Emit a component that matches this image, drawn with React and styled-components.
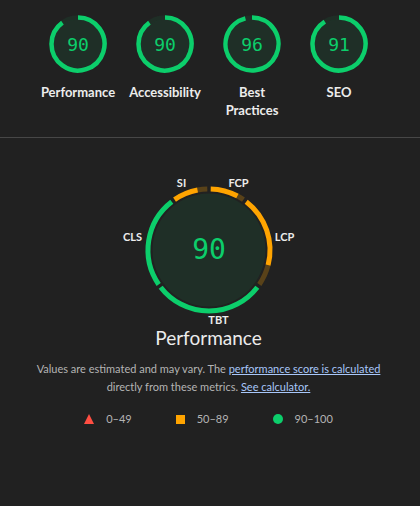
import React from 'react';
import styled, {createGlobalStyle} from 'styled-components';

const GREEN = '#0cce6b';
const ORANGE = '#ffa400';
const RED = '#ff4e42';

const GlobalStyle = createGlobalStyle`
  body {
    margin: 0;
    background: #212121;
    font-family: "Segoe UI", Lato, "Noto Sans", sans-serif;
    color: #e8e8e8;
  }
`;

const Page = styled.div`
  width: 420px;
  min-height: 506px;
  background: #212121;
`;

const TopSection = styled.div`
  display: flex;
  justify-content: center;
  align-items: flex-start;
  padding: 15px 3px 18px 0;
  border-bottom: 1px solid #474747;
`;

const ScoreItem = styled.div`
  width: 87px;
  display: flex;
  flex-direction: column;
  align-items: center;
`;

const ScoreLabel = styled.div`
  margin-top: 10px;
  font-size: 13px;
  font-weight: 700;
  line-height: 18px;
  text-align: center;
  color: #ececec;
`;

const PerfSection = styled.div`
  display: flex;
  flex-direction: column;
  align-items: center;
  padding: 32px 3px 0 0;
`;

const PerfTitle = styled.div`
  margin-top: 2px;
  font-size: 19px;
  line-height: 20px;
  color: #ececec;
`;

const Note = styled.p`
  margin: 12px 0 0;
  font-size: 11px;
  line-height: 18px;
  text-align: center;
  color: #b4b4b4;
`;

const Link = styled.a`
  color: #a8c7fa;
  text-decoration: underline;
`;

const Legend = styled.div`
  display: flex;
  align-items: center;
  gap: 44px;
  margin-top: 14px;
  font-size: 11px;
  line-height: 18px;
  color: #b4b4b4;
`;

const LegendItem = styled.div`
  display: flex;
  align-items: center;
  gap: 12px;
`;

const Marker = styled.span`
  display: inline-block;
  ${({$kind}) =>
    $kind === 'fail'
      ? `width: 0; height: 0; border-left: 5px solid transparent; border-right: 5px solid transparent; border-bottom: 10px solid ${RED};`
      : $kind === 'average'
      ? `width: 9px; height: 9px; background: ${ORANGE};`
      : `width: 10px; height: 10px; border-radius: 50%; background: ${GREEN};`}
`;

const GaugeNum = styled.text`
  font-family: "DejaVu Sans Mono", "Liberation Mono", monospace;
  fill: ${GREEN};
`;

const MetricLabel = styled.text`
  font-family: "Segoe UI", Lato, "Noto Sans", sans-serif;
  font-size: 11px;
  font-weight: 700;
  fill: #ececec;
`;

function polar(cx, cy, r, deg) {
  const a = ((deg - 90) * Math.PI) / 180;
  return [cx + r * Math.cos(a), cy + r * Math.sin(a)];
}

function arc(cx, cy, r, a0, a1) {
  const [x0, y0] = polar(cx, cy, r, a0);
  const [x1, y1] = polar(cx, cy, r, a1);
  const large = a1 - a0 > 180 ? 1 : 0;
  return `M ${x0} ${y0} A ${r} ${r} 0 ${large} 1 ${x1} ${y1}`;
}

function SmallGauge({score}) {
  const c = 29;
  const end = Math.min(359.9, (score / 100) * 360);
  return (
    <svg width="58" height="58" viewBox="0 0 58 58">
      <circle cx={c} cy={c} r="24.5" fill="#1f2f27" />
      <circle cx={c} cy={c} r="26.5" fill="none" stroke="rgba(12,206,107,0.08)" strokeWidth="4.5" />
      <path d={arc(c, c, 26.5, 0, end)} fill="none" stroke={GREEN} strokeWidth="4.5" />
      <GaugeNum x={c} y={c + 6.5} textAnchor="middle" fontSize="18">
        {score}
      </GaugeNum>
    </svg>
  );
}

const segments = [
  {name: 'FCP', start: 0, end: 36, score: 0.8, color: ORANGE, dim: '#594219'},
  {name: 'LCP', start: 36, end: 126, score: 0.77, color: ORANGE, dim: '#594219'},
  {name: 'TBT', start: 126, end: 234, score: 1, color: GREEN, dim: '#1f4a33'},
  {name: 'CLS', start: 234, end: 324, score: 1, color: GREEN, dim: '#1f4a33'},
  {name: 'SI', start: 324, end: 360, score: 0.72, color: ORANGE, dim: '#594219'},
];

const labels = [
  {name: 'SI', x: 67.5, y: 17},
  {name: 'FCP', x: 124.5, y: 17},
  {name: 'CLS', x: 18.5, y: 71},
  {name: 'LCP', x: 170.5, y: 71},
  {name: 'TBT', x: 104.5, y: 154},
];

function BigGauge() {
  const cx = 95;
  const cy = 80;
  const r = 61;
  const gap = 1.6;
  return (
    <svg width="190" height="156" viewBox="0 0 190 156">
      <circle cx={cx} cy={cy} r="56.5" fill="#1f2f27" />
      {segments.map((s) => {
        const a0 = s.start + gap;
        const a1 = s.end - gap;
        const lit = a0 + (a1 - a0) * s.score;
        return (
          <g key={s.name}>
            {s.score < 1 && (
              <path d={arc(cx, cy, r, lit, a1)} fill="none" stroke={s.dim} strokeWidth="5" />
            )}
            <path d={arc(cx, cy, r, a0, lit)} fill="none" stroke={s.color} strokeWidth="5" />
          </g>
        );
      })}
      <GaugeNum x={cx} y={cy + 9} textAnchor="middle" fontSize="28">
        90
      </GaugeNum>
      {labels.map((l) => (
        <MetricLabel key={l.name} x={l.x} y={l.y} textAnchor="middle">
          {l.name}
        </MetricLabel>
      ))}
    </svg>
  );
}

const categories = [
  {name: 'Performance', score: 90},
  {name: 'Accessibility', score: 90},
  {name: 'Best Practices', score: 96},
  {name: 'SEO', score: 91},
];

export default function App() {
  return (
    <Page>
      <GlobalStyle />
      <TopSection>
        {categories.map((c) => (
          <ScoreItem key={c.name}>
            <SmallGauge score={c.score} />
            <ScoreLabel>{c.name === 'Best Practices' ? <>Best<br />Practices</> : c.name}</ScoreLabel>
          </ScoreItem>
        ))}
      </TopSection>
      <PerfSection>
        <BigGauge />
        <PerfTitle>Performance</PerfTitle>
        <Note>
          Values are estimated and may vary. The <Link href="#">performance score is calculated</Link>
          <br />
          directly from these metrics. <Link href="#">See calculator.</Link>
        </Note>
        <Legend>
          <LegendItem>
            <Marker $kind="fail" />
            0–49
          </LegendItem>
          <LegendItem>
            <Marker $kind="average" />
            50–89
          </LegendItem>
          <LegendItem>
            <Marker $kind="pass" />
            90–100
          </LegendItem>
        </Legend>
      </PerfSection>
    </Page>
  );
}
